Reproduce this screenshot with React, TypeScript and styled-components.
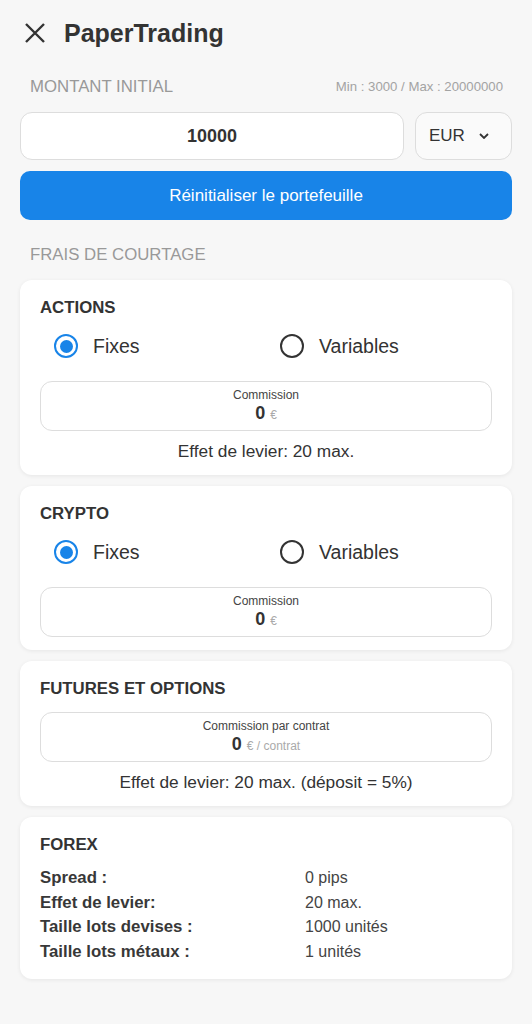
import React, { useState } from "react";
import styled, { createGlobalStyle } from "styled-components";

const GlobalStyle = createGlobalStyle`
  html, body {
    margin: 0;
    padding: 0;
    background: #f7f7f7;
    font-family: "Liberation Sans", Arial, sans-serif;
    color: #333;
  }
  * { box-sizing: border-box; }
`;

const Page = styled.div`
  padding: 0 20px 40px;
  min-height: 1024px;
`;

const Header = styled.header`
  display: flex;
  align-items: center;
  height: 66px;
  padding-left: 4px;
  gap: 18px;
`;

const CloseButton = styled.button`
  display: flex;
  padding: 0;
  border: 0;
  background: none;
  cursor: pointer;
`;

const Title = styled.h1`
  margin: 0;
  font-size: 25px;
  font-weight: 700;
  color: #333;
`;

const SectionRow = styled.div<{ $top: number }>`
  display: flex;
  justify-content: space-between;
  align-items: center;
  margin-top: ${({ $top }) => $top}px;
  padding: 0 9px 0 10px;
  line-height: 22px;
`;

const SectionLabel = styled.span`
  font-size: 16.8px;
  color: #999;
  text-transform: uppercase;
`;

const Limits = styled.span`
  font-size: 13.2px;
  color: #a3a3a3;
`;

const AmountRow = styled.div`
  display: flex;
  gap: 11px;
  margin-top: 14px;
`;

const AmountInput = styled.input`
  flex: 1;
  min-width: 0;
  height: 48px;
  border: 1px solid #ddd;
  border-radius: 12px;
  background: #fff;
  text-align: center;
  font-family: inherit;
  font-size: 18px;
  font-weight: 700;
  color: #333;
  outline: none;
`;

const CurrencySelect = styled.button`
  display: flex;
  align-items: center;
  justify-content: space-between;
  width: 97px;
  height: 48px;
  padding: 0 22px 0 13px;
  border: 1px solid #ddd;
  border-radius: 12px;
  background: #fafafa;
  font-family: inherit;
  font-size: 17px;
  color: #333;
`;

const ResetButton = styled.button`
  display: block;
  width: 100%;
  height: 49px;
  margin-top: 11px;
  border: 0;
  border-radius: 10px;
  background: #1884e8;
  color: #fff;
  font-family: inherit;
  font-size: 17px;
  cursor: pointer;
`;

const Cards = styled.div`
  display: flex;
  flex-direction: column;
  gap: 11px;
  margin-top: 14px;
`;

const Card = styled.section`
  background: #fff;
  border-radius: 12px;
  padding: 16px 20px 13px;
  box-shadow: 0 1px 4px rgba(0, 0, 0, 0.07);
`;

const CardTitle = styled.h2`
  margin: 0;
  font-size: 16.8px;
  line-height: 24px;
  font-weight: 700;
  color: #333;
`;

const RadioGroup = styled.div`
  display: grid;
  grid-template-columns: 1fr 1fr;
  margin-top: 6px;
`;

const RadioOption = styled.label`
  display: flex;
  align-items: center;
  gap: 15px;
  height: 40px;
  padding-left: 14px;
  font-size: 19.5px;
  color: #333;
  cursor: pointer;
`;

const RadioCircle = styled.span<{ $checked: boolean }>`
  display: flex;
  align-items: center;
  justify-content: center;
  width: 24px;
  height: 24px;
  border-radius: 50%;
  border: 2.5px solid ${({ $checked }) => ($checked ? "#1884e8" : "#333")};
  &::after {
    content: "";
    width: 13px;
    height: 13px;
    border-radius: 50%;
    background: #1884e8;
    display: ${({ $checked }) => ($checked ? "block" : "none")};
  }
`;

const CommissionBox = styled.div<{ $top: number }>`
  margin-top: ${({ $top }) => $top}px;
  border: 1px solid #ddd;
  border-radius: 12px;
  padding: 6px 0;
  text-align: center;
`;

const CommissionLabel = styled.div`
  font-size: 12px;
  line-height: 15px;
  color: #444;
`;

const CommissionValue = styled.div`
  line-height: 21px;
  font-size: 18px;
  font-weight: 700;
  color: #333;
`;

const Unit = styled.span`
  margin-left: 5px;
  font-size: 12px;
  line-height: 1;
  font-weight: 400;
  color: #aaa;
`;

const Leverage = styled.p`
  margin: 9px 0 0;
  text-align: center;
  font-size: 17.3px;
  line-height: 22px;
  color: #333;
`;

const InfoGrid = styled.dl`
  display: grid;
  grid-template-columns: 265px 1fr;
  margin: 9px 0 2px;
  font-size: 16px;
  line-height: 24.6px;
`;

const InfoLabel = styled.dt`
  font-size: 16.8px;
  font-weight: 700;
  color: #383838;
`;

const InfoValue = styled.dd`
  margin: 0;
  color: #444;
`;

const CloseIcon = () => (
  <svg width="22" height="22" viewBox="0 0 22 22">
    <path d="M2 2 L20 20 M20 2 L2 20" stroke="#333" strokeWidth="2.4" strokeLinecap="butt" />
  </svg>
);

const Chevron = () => (
  <svg width="10" height="6" viewBox="0 0 10 6">
    <path d="M1 1 L5 5 L9 1" stroke="#333" strokeWidth="1.8" fill="none" />
  </svg>
);

type FeeMode = "fixes" | "variables";

const FeeRadios = ({ value, onChange }: { value: FeeMode; onChange: (v: FeeMode) => void }) => (
  <RadioGroup>
    <RadioOption onClick={() => onChange("fixes")}>
      <RadioCircle $checked={value === "fixes"} />
      Fixes
    </RadioOption>
    <RadioOption onClick={() => onChange("variables")}>
      <RadioCircle $checked={value === "variables"} />
      Variables
    </RadioOption>
  </RadioGroup>
);

const Commission = ({ label, unit, top }: { label: string; unit: string; top: number }) => (
  <CommissionBox $top={top}>
    <CommissionLabel>{label}</CommissionLabel>
    <CommissionValue>
      0<Unit>{unit}</Unit>
    </CommissionValue>
  </CommissionBox>
);

const forex = [
  ["Spread :", "0 pips"],
  ["Effet de levier:", "20 max."],
  ["Taille lots devises :", "1000 unités"],
  ["Taille lots métaux :", "1 unités"],
];

export default function App() {
  const [amount, setAmount] = useState("10000");
  const [actions, setActions] = useState<FeeMode>("fixes");
  const [crypto, setCrypto] = useState<FeeMode>("fixes");

  return (
    <Page>
      <GlobalStyle />
      <Header>
        <CloseButton aria-label="Fermer">
          <CloseIcon />
        </CloseButton>
        <Title>PaperTrading</Title>
      </Header>

      <SectionRow $top={10}>
        <SectionLabel>Montant initial</SectionLabel>
        <Limits>Min : 3000 / Max : 20000000</Limits>
      </SectionRow>

      <AmountRow>
        <AmountInput value={amount} onChange={(e) => setAmount(e.target.value)} />
        <CurrencySelect>
          EUR
          <Chevron />
        </CurrencySelect>
      </AmountRow>

      <ResetButton>Réinitialiser le portefeuille</ResetButton>

      <SectionRow $top={24}>
        <SectionLabel>Frais de courtage</SectionLabel>
      </SectionRow>

      <Cards>
        <Card>
          <CardTitle>ACTIONS</CardTitle>
          <FeeRadios value={actions} onChange={setActions} />
          <Commission label="Commission" unit="€" top={15} />
          <Leverage>Effet de levier: 20 max.</Leverage>
        </Card>

        <Card>
          <CardTitle>CRYPTO</CardTitle>
          <FeeRadios value={crypto} onChange={setCrypto} />
          <Commission label="Commission" unit="€" top={15} />
        </Card>

        <Card>
          <CardTitle>FUTURES ET OPTIONS</CardTitle>
          <Commission label="Commission par contrat" unit="€ / contrat" top={11} />
          <Leverage>Effet de levier: 20 max. (déposit = 5%)</Leverage>
        </Card>

        <Card>
          <CardTitle>FOREX</CardTitle>
          <InfoGrid>
            {forex.map(([k, v]) => (
              <React.Fragment key={k}>
                <InfoLabel>{k}</InfoLabel>
                <InfoValue>{v}</InfoValue>
              </React.Fragment>
            ))}
          </InfoGrid>
        </Card>
      </Cards>
    </Page>
  );
}
